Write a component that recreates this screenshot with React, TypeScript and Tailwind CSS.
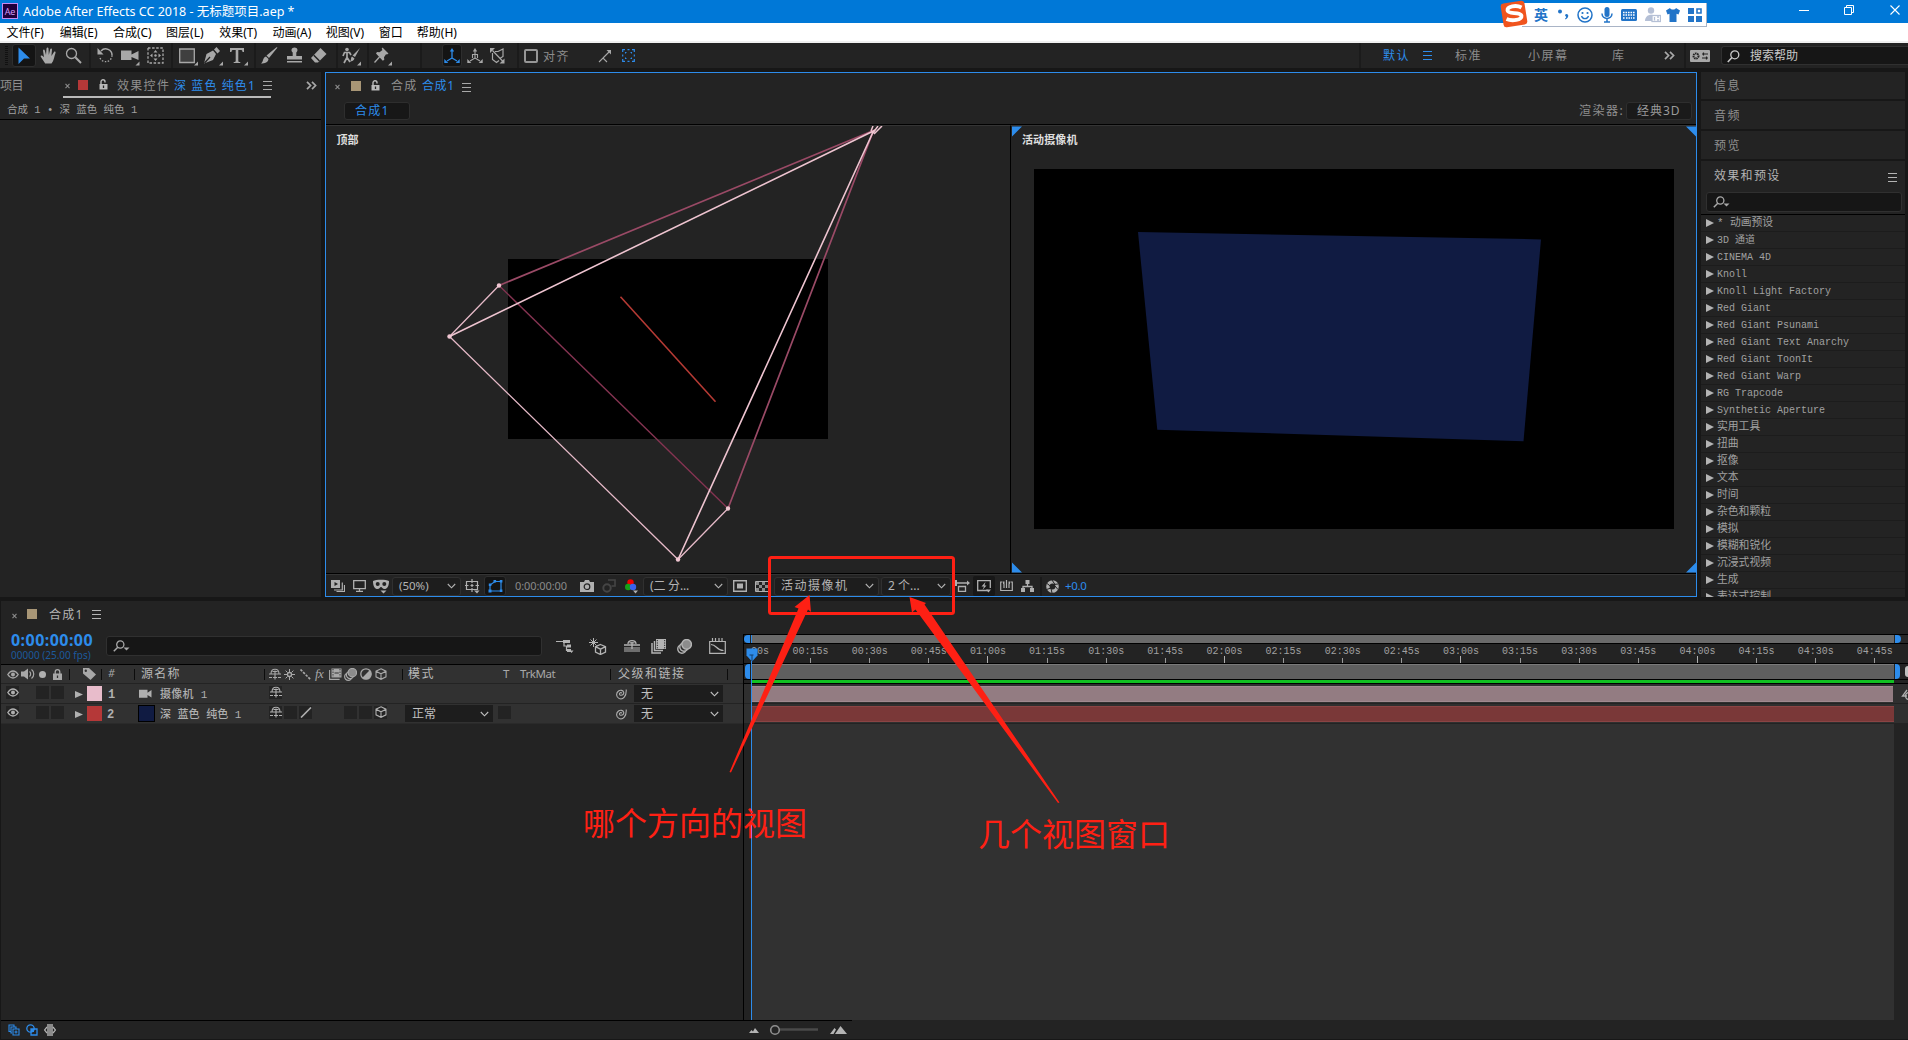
import React, { ReactNode } from "react";

const CJK = "font-['Noto_Sans','Noto_Sans_CJK_SC',sans-serif]";
const MONO = "font-['Liberation_Mono','Noto_Sans_CJK_SC',monospace]";

function Slot({ c, children }: { c: string; children?: ReactNode }) {
  return <div className={`flex h-full shrink-0 items-center whitespace-nowrap ${c}`}>{children}</div>;
}

function Icon({ w, h, vb, className = "", children }: { w: number; h: number; vb?: string; className?: string; children: ReactNode }) {
  return (
    <svg width={w} height={h} viewBox={vb ?? `0 0 ${w} ${h}`} fill="none" stroke="currentColor" strokeWidth="1.3" className={`shrink-0 ${className}`}>
      {children}
    </svg>
  );
}

const F = { fill: "currentColor", stroke: "none" };

const Burger = ({ className = "" }: { className?: string }) => (
  <Icon w={9} h={9} className={className}><path d="M0 .5h9M0 4.5h9M0 8.5h9" strokeWidth="1" /></Icon>
);
const Cross = () => <Icon w={5} h={6} className="text-[#8a8a8a]"><path d="M.5 .8l4 4.4M4.5 .8l-4 4.4" strokeWidth="1.1" /></Icon>;
const Chevrons = () => <Icon w={11} h={9}><path d="M1 .8l3.6 3.7L1 8.2M6 .8l3.6 3.7L6 8.2" strokeWidth="1.7" /></Icon>;
const Unlock = () => (
  <Icon w={9} h={11}><path d="M2 5V2.8a2 2 0 0 1 4 0V3.5" strokeWidth="1.4" /><path d="M.5 5h8v5.5h-8z" {...F} /><path d="M4.5 6.5v2.5" stroke="#232323" /></Icon>
);
const ChevDown = () => <Icon w={9} h={6}><path d="M.8 1l3.7 3.8L8.2 1" strokeWidth="1.1" /></Icon>;
const Find = () => (
  <Icon w={17} h={12}><circle cx="7.3" cy="4.5" r="3.6" /><path d="M4.8 7.2L.8 11.2" strokeWidth="1.5" /><path d="M10.5 7.6h6l-3 3z" {...F} /></Icon>
);

const Eye = () => (
  <Icon w={12} h={9}><path d="M.8 4.5Q3 1 6 1t5.2 3.5Q9 8 6 8T.8 4.5z" /><circle cx="6" cy="4.4" r="2" {...F} /></Icon>
);
const Shy = () => (
  <Icon w={12} h={12}><path d="M2 6C2 3 3.500 1.200 6 1.200s4 1.800 4 4.800M0 6h12M3 9.500h-3M9 9.500h3M6 2.500v9M3.500 3.500h5M4 9.500h4" strokeWidth="1.100" /></Icon>
);
const Cube = () => (
  <Icon w={12} h={12}><path d="M6 .8l5 2.400v5.600l-5 2.500-5-2.500V3.200zM1 3.200l5 2.600 5-2.600M6 5.800v5.500" strokeWidth="1.100" /></Icon>
);
const Film = () => (
  <Icon w={13} h={12}><path d="M2.500 .5h10v9h-10z" {...F} /><path d="M4 1v8M11 1v8" stroke="#313131" strokeDasharray="1.300 1.300" strokeWidth="1" /><path d="M5.500 5h4.300" stroke="#313131" strokeWidth="1" /><path d="M.6 2v9.400h10" strokeWidth="1.100" /></Icon>
);
const Blur = ({ s = 13 }: { s?: number }) => (
  <Icon w={s} h={s} vb="0 0 14 14"><circle cx="4.600" cy="9.400" r="3.900" /><circle cx="6.500" cy="7.500" r="3.900" fill="#313131" /><circle cx="9" cy="5" r="4.500" fill="#8c8c8c" /></Icon>
);
const Spiral = () => (
  <Icon w={12} h={12}><path d="M6.900 5.300a1.300 1.300 0 1 0-.9 2C8 7.300 9 6 8.700 4.400 8.200 2.200 5.400 1.600 3.500 3 .8 5 1 9.200 4.200 10.600 8 12 11.600 8.500 11.200 1.500" strokeWidth="1.100" /></Icon>
);
const CamSmall = () => (
  <Icon w={13} h={10}><path d="M0 .8h8.500v3L12.500 1v7.500L8.500 6v2.800H0z" {...F} /></Icon>
);

function TitleBar() {
  return (
    <div className="flex h-[23px] w-full shrink-0 items-start bg-[#0078d7] text-white">
      <div className="ml-[2px] mt-[3px] flex h-4 w-4 items-center justify-center border border-[#c58af0] bg-[#20003c] font-['Open_Sans'] text-[9px] leading-none text-[#d5a0ff]">Ae</div>
      <div className={`ml-[5px] h-[23px] w-[1776px] whitespace-nowrap text-[12.500px] leading-[23px] ${CJK}`}>Adobe After Effects CC 2018 - 无标题项目.aep *</div>
      <Icon w={11} h={20}><path d="M0 10.500h10" strokeWidth="1" /></Icon>
      <Icon w={12} h={20} className="ml-[34px]"><path d="M.5 7.500h7v7h-7zM2.500 7.500v-2h7v7h-2" strokeWidth="1" /></Icon>
      <Icon w={11} h={20} className="ml-[34px]"><path d="M.5 5.500l9 9M9.500 5.500l-9 9" strokeWidth="1.100" /></Icon>
    </div>
  );
}

function MenuBar() {
  return (
    <div className={`flex h-5 w-full shrink-0 border-b-2 border-[#f0f0f0] bg-white pl-[6.500px] text-[12px] leading-[19px] text-black ${CJK}`}>
      {["文件(F)", "编辑(E)", "合成(C)", "图层(L)", "效果(T)", "动画(A)", "视图(V)"].map((m) => (
        <span key={m} className="w-[53.200px] shrink-0 whitespace-nowrap">{m}</span>
      ))}
      <span className="w-[38px]">窗口</span>
      <span>帮助(H)</span>
    </div>
  );
}

const Sep = ({ c }: { c: string }) => (
  <Slot c={c}><div className="h-full w-[2px] bg-[#1b1b1b]" /></Slot>
);

function ToolBar() {
  return (
    <div className={`flex h-[25px] w-full shrink-0 bg-[#232323] pl-[5px] text-[12px] text-[#a8a8a8] ${CJK}`}>
      <Slot c="w-[7px]"><Icon w={3} h={20}><path d="M1.500 0v20" stroke="#111" strokeWidth="3" strokeDasharray="1 1" /></Icon></Slot>
      <Slot c="w-[28px]">
        <div className="flex h-[23px] w-6 items-center justify-center rounded-[3px] border border-[#2e2e2e] bg-[#141414] text-[#2d8ceb]">
          <Icon w={14} h={18}><path d="M1.500 0.500l11.500 11H7l-5.500 5.500z" {...F} /></Icon>
        </div>
      </Slot>
      <Slot c="w-[25px]">
        <Icon w={17} h={17}><path d="M5.200 16.500C3.500 14 1.500 11 .5 9c.8-1 2-.5 3.500 1.200L3 3.500c.2-1.300 1.500-1.300 1.800 0L6 8 6.500 1.500C6.800.2 8.300.2 8.500 1.500L8.800 8l1.400-5.800c.5-1.200 1.800-.9 1.800.4L11.400 9l2.600-4c.8-.9 1.900-.2 1.500.9-1.200 3.200-1.600 7.600-4 10.600z" {...F} /></Icon>
      </Slot>
      <Slot c="w-[24px]"><Icon w={17} h={17}><circle cx="6.500" cy="6.500" r="5" /><path d="M10.300 10.300l5.700 5.700" strokeWidth="2" /></Icon></Slot>
      <Sep c="w-[8px]" />
      <Slot c="w-[24px]"><Icon w={17} h={17}><path d="M4 4a6.300 6.300 0 0 1 11 4.500" strokeWidth="1.500" /><path d="M15 8.500A6.300 6.300 0 0 1 2.500 9.500" strokeDasharray="1.500 1.500" /><path d="M.5 1v6.500h6z" {...F} /></Icon></Slot>
      <Slot c="w-[26px]"><Icon w={20} h={20}><path d="M0 4.500h10.500v4L17.500 5v9l-7-3v3H0z" {...F} /><path d="M18.500 15.500v4h-4z" {...F} /></Icon></Slot>
      <Slot c="w-[24px]"><Icon w={17} h={17}><path d="M1 1h15v15H1z" strokeDasharray="2.500 1.600" /><path d="M8.500 3l2 2.500h-4zM8.500 14l2-2.500h-4zM3 8.500l2.500-2v4zM14 8.500l-2.500-2v4z" {...F} /><circle cx="8.500" cy="8.500" r="1.200" {...F} /></Icon></Slot>
      <Sep c="w-[8px]" />
      <Slot c="w-[25px]"><Icon w={20} h={20}><path d="M.7 3h14.600v13.500H.7z" fill="#3f3f3f" /><path d="M19 15.500v4h-4z" {...F} /></Icon></Slot>
      <Slot c="w-[26px]"><Icon w={22} h={20}><path d="M0 17.500L2.500 8 9 4.500 12 8l-3 6zM10 3.500L12.500 1 16 5l-2.500 2.500z" {...F} /><path d="M.5 17l5.500-6" stroke="#232323" /><path d="M19 15.500v4h-4z" {...F} /></Icon></Slot>
      <Slot c="w-[24px]"><Icon w={20} h={20}><path d="M0 2h14v4h-1.500c0-1.500-.5-2-2-2H8.300v11c0 .8.500 1 2 1v1H3.700v-1c1.500 0 2-.2 2-1V4H3.500C2 4 1.500 4.500 1.500 6H0z" {...F} /><path d="M18 15.500v4h-4z" {...F} /></Icon></Slot>
      <Sep c="w-[7px]" />
      <Slot c="w-[25px]"><Icon w={17} h={17}><path d="M16.500 .5L8 11 5.500 8.500 15.500.200zM5 9.500l2.500 2.500C7 15.500 4 16.500 0 16.500 2.500 15 1.500 10.500 5 9.500z" {...F} /></Icon></Slot>
      <Slot c="w-[24px]"><Icon w={17} h={17}><path d="M6.700 9V5.500C4.500 3.500 5.500.5 8.500.5s4 3 1.800 5V9H16v3.500H1V9zM1 14h15v1.500H1z" {...F} /></Icon></Slot>
      <Slot c="w-[26px]"><Icon w={18} h={17}><path d="M10.500 1L16.500 7 8 15.500H5L1 11z" {...F} /><path d="M3.800 8.300L9.500 14" stroke="#232323" strokeWidth="1.500" /></Icon></Slot>
      <Sep c="w-[6px]" />
      <Slot c="w-[25px]"><Icon w={20} h={20}><circle cx="5" cy="3.500" r="1.800" {...F} /><path d="M1 10l1.500-3.500h5L9 9M5 6.500v5L2 17M5 11.500L8 16" strokeWidth="1.700" /><path d="M18 2l-5 9-2.500-1.500zM10 10.500l2.500 2c-.5 2-2.500 3-4.500 3 1.500-1.500.5-4 2-5z" {...F} /><path d="M19 15.500v4h-4z" {...F} /></Icon></Slot>
      <Sep c="w-[7px]" />
      <Slot c="w-[46px]"><Icon w={20} h={20}><path d="M8.500 1.500l6 6-1.500 1-1-.3-2 3 .3 2.500-1.500 1L2 7.500l1-1.500 2.500.3 3-2.300-.8-1.300z" {...F} /><path d="M5.500 11l-5 5.500" /><path d="M18 15.500v4h-4z" {...F} /></Icon></Slot>
      <Sep c="w-[22px]" />
      <Slot c="w-[25px]">
        <div className="flex h-[23px] w-5 items-center justify-center rounded-[3px] border border-[#2e2e2e] bg-[#141414] text-[#2d8ceb]">
          <Icon w={16} h={16}><path d="M8 3v7M8 10l-5 3M8 10l5 3" /><path d="M8 0l2.200 3.500H5.800zM.3 11v4h4zM15.700 11v4h-4z" {...F} /></Icon>
        </div>
      </Slot>
      <Slot c="w-[23px]"><Icon w={16} h={16}><path d="M8 3v7M8 10l-5 3M8 10l5 3M5.500 10V6.500h5V10" strokeWidth="1.100" /><path d="M8 0l2.200 3.500H5.800zM.3 11v4h4zM15.700 11v4h-4z" {...F} /></Icon></Slot>
      <Slot c="w-[27px]"><Icon w={15} h={16}><path d="M2.500 2.500l10.500 11M5 3.500h3L13 1v7.500L10.500 10M2.500 5v6.500l4 3L9 12.500" strokeWidth="1.200" /><path d="M0 0h5L0 5zM14.500 10.500v5h-5z" {...F} /></Icon></Slot>
      <Sep c="w-[7px]" />
      <Slot c="w-[19px]"><div className="h-[14px] w-[14px] rounded-[2px] border-2 border-[#969696]" /></Slot>
      <Slot c="w-[55px] pt-[2px] tracking-[1.500px] text-[#8c8c8c]">对齐</Slot>
      <Slot c="w-[24px]"><Icon w={14} h={14}><path d="M5 9l7-7M1 13l4-4 4 4" strokeWidth="1.100" /><path d="M8.500 1H13v4.500z" {...F} /></Icon></Slot>
      <Slot c="w-[737px] text-[#2d8ceb]"><Icon w={13} h={13}><path d="M.7 3V.7H3M10 .7h2.300V3M.7 10v2.300H3M10 12.300h2.300V10M.7 5.500v2M12.300 5.500v2M5.500 .7h2M5.500 12.300h2" strokeWidth="1.200" /><path d="M3.500 4.500v-1h1M8.500 3.500h1v1M3.500 8.500v1h1M8.500 9.500h1v-1" strokeWidth="1.100" /></Icon></Slot>
      <Sep c="w-[24px]" />
      <Slot c="w-[40px] pt-px tracking-[1.500px] text-[#2d8ceb]">默认</Slot>
      <Slot c="w-[32px] text-[#2d8ceb]"><Burger /></Slot>
      <Slot c="w-[73px] pt-px tracking-[1.500px] text-[#8c8c8c]">标准</Slot>
      <Slot c="w-[84px] pt-px tracking-[1.500px] text-[#8c8c8c]">小屏幕</Slot>
      <Slot c="w-[52px] pt-px text-[#8c8c8c]">库</Slot>
      <Slot c="w-[20px]"><Chevrons /></Slot>
      <Sep c="w-[6px]" />
      <Slot c="w-[31px]"><Icon w={20} h={12}><rect width="20" height="12" rx="1" {...F} /><circle cx="6" cy="6" r="2.500" stroke="#232323" strokeWidth="2" strokeDasharray="1.500 .6" /><path d="M12 4h6M12 8h6M13.500 2.500v3M16.500 6.500v3" stroke="#232323" strokeWidth="1.200" /></Icon></Slot>
      <Slot c="w-[187px]">
        <div className="flex h-[19px] w-full items-center rounded-l-[3px] border border-r-0 border-[#303030] bg-[#161616] pl-[5px] pt-px text-[#c8c8c8]">
          <Icon w={13} h={13} className="mr-[10px]"><circle cx="7.800" cy="4.800" r="4" /><path d="M5 7.500L.8 12" strokeWidth="1.600" /></Icon>
          搜索帮助
        </div>
      </Slot>
    </div>
  );
}

function ImeBar() {
  return (
    <div className="absolute left-[1500px] top-0 flex h-[27px] w-[207px] items-start text-[#2274c8]">
      <Icon w={29} h={28} className="z-10">
        <rect x="2" y="2" width="24" height="24" rx="3" transform="rotate(-9 14 14)" fill="#f0541e" stroke="none" />
        <path d="M21.500 7.500C16 4.500 7 6.500 7.500 10.500c.5 4 13.500 1 14 5.500.4 4-9.500 5.500-15 3" stroke="#fff" strokeWidth="3.800" />
      </Icon>
      <div className={`-ml-[7px] mt-[3px] flex h-[24px] w-[185px] items-center border-b border-r border-[#a9b4c6] bg-white pl-[12px] text-[14px] font-bold leading-none ${CJK}`}>
        <Slot c="w-[24px]">英</Slot>
        <Slot c="w-[19px]"><Icon w={11} h={12}><circle cx="2" cy="2.500" r="2" {...F} /><path d="M8.500 5c2.500 0 2.500 4-1 5.500l-.5-1c1.200-.7 1.300-1.200 1-2-1.500-.2-1-2.500.500-2.500z" {...F} /></Icon></Slot>
        <Slot c="w-[24px]"><Icon w={16} h={16}><circle cx="8" cy="8" r="7" strokeWidth="1.500" /><circle cx="5.500" cy="6" r="1.100" {...F} /><circle cx="10.500" cy="6" r="1.100" {...F} /><path d="M4.500 9c1 3.500 6 3.500 7 0" /></Icon></Slot>
        <Slot c="w-[20px]"><Icon w={12} h={16}><rect x="3.500" y="0" width="5" height="10" rx="2.500" {...F} /><path d="M1 6.500c0 6.500 10 6.500 10 0M6 11.500V15M3 15h6" strokeWidth="1.500" /></Icon></Slot>
        <Slot c="w-[24px]"><Icon w={16} h={12}><rect width="16" height="12" rx="1.500" {...F} /><path d="M2 3.500h12M2 6h12M2 9h2M5 9h6M12 9h2" stroke="#fff" strokeWidth="1.300" strokeDasharray="1.600 .9" /></Icon></Slot>
        <Slot c="w-[21px] text-[#b5c0d6]"><Icon w={16} h={16}><circle cx="6" cy="3.500" r="3.200" {...F} /><path d="M0 14c0-8 11-8 11-2v2z" {...F} /><rect x="7" y="8.500" width="8.500" height="6" fill="#fff" /><path d="M9.500 10v3.500M12 10h2M12 13h2" /></Icon></Slot>
        <Slot c="w-[22px]"><Icon w={14} h={14}><path d="M4 0c1 2 5 2 6 0l4 2.500-1.500 4-2-.8V14h-7V5.700l-2 .8L0 2.500z" {...F} /></Icon></Slot>
        <Slot c="w-[14px]"><Icon w={14} h={14}><path d="M0 0h6v6H0zM0 8h6v6H0zM8 8h6v6H8z" {...F} /><path d="M9 1h4v4H9z" strokeWidth="1.600" /></Icon></Slot>
      </div>
    </div>
  );
}

function LeftPanel() {
  return (
    <div className={`mr-1 flex h-[525px] w-[321px] shrink-0 flex-col bg-[#232323] text-[12px] text-[#8f8f8f] ${CJK}`}>
      <div className="flex h-[26px] shrink-0">
        <Slot c="w-[63px] pt-px tracking-[-0.500px]">项目</Slot>
        <div className="mr-[35px] flex h-[26px] w-[208px] shrink-0 border-b-2 border-[#b9b9b9] pl-[2px]">
          <Slot c="w-[13px] pt-[4px]"><Cross /></Slot>
          <Slot c="w-[21px] pt-[2px]"><div className="h-[10px] w-[8px] bg-[#b53838] px-[5px]" /></Slot>
          <Slot c="w-[18px] pt-px text-[#b9b9b9]"><Unlock /></Slot>
          <Slot c="w-[57px] pt-[3px] tracking-[1.300px]">效果控件</Slot>
          <Slot c="w-[89px] pt-[3px] text-[#2d8ceb] tracking-[1.100px]">深 蓝色 纯色1</Slot>
          <Slot c="w-[9px] pt-[3px] text-[#a8a8a8]"><Burger /></Slot>
        </div>
        <Slot c="w-[12px] text-[#a8a8a8]"><Chevrons /></Slot>
      </div>
      <div className={`flex h-[22px] shrink-0 items-center whitespace-pre border-b border-black pl-[7px] pt-[4px] text-[10.500px] text-[#a0a0a0] ${MONO}`}>合成 1 • 深 蓝色 纯色 1</div>
    </div>
  );
}

function Dropdown({ c, text }: { c: string; text: string }) {
  return (
    <div className={`flex h-[19px] shrink-0 items-center justify-between whitespace-nowrap rounded-[3px] border border-[#303030] bg-[#1d1d1d] pl-[6px] pr-[4px] text-[#b4b4b4] ${c}`}>
      <span>{text}</span>
      <ChevDown />
    </div>
  );
}

function ViewerBar() {
  return (
    <div className={`flex h-[23px] shrink-0 items-center border-t border-[#343434] pl-[5px] text-[11.500px] text-[#b0b0b0] ${CJK}`}>
      <Slot c="w-[22px]"><Icon w={14} h={12}><path d="M0 0h9v8H0z" {...F} /><path d="M3.500 2v4l3.500-2z" fill="#232323" stroke="none" /><path d="M3 10h8.300V2.500M5.500 11.500h8V5" strokeWidth="1.200" /></Icon></Slot>
      <Slot c="w-[20px]"><Icon w={13} h={12}><path d="M.7.700h11.600v8H.7zM3 11.400h7M6.500 9v2" /></Icon></Slot>
      <Slot c="w-[19px]"><Icon w={16} h={16} className="mt-[2px]"><path d="M0 2C3 .2 13 .2 16 2c0 5.500-2 8-4.500 8C9.500 10 9 8 8 8s-1.500 2-3.500 2C2 10 0 7.500 0 2z" {...F} /><circle cx="4.700" cy="5" r="2" fill="#232323" stroke="none" /><circle cx="11.300" cy="5" r="2" fill="#232323" stroke="none" /><path d="M7.500 11.500h6l-3 3z" {...F} /></Icon></Slot>
      <Dropdown c="w-[69px] mr-1" text="(50%)" />
      <Slot c="w-[19px]"><Icon w={15} h={15}><path d="M1.500 2.500h11v8h-11zM7 0v4M7 9v4M0 6.500h3.500M10.500 6.500H14M7 5v3M5.500 6.500h3" strokeWidth="1.200" /><path d="M9 11.500h5.500L12 14.500z" {...F} /></Icon></Slot>
      <div className="mr-[9px] flex h-5 w-[22px] shrink-0 items-center justify-center rounded-[3px] border border-[#2e2e2e] bg-[#141414] text-[#2d8ceb]">
        <Icon w={15} h={13}><path d="M2 11V5l5-3.500h6V11z" strokeWidth="1.200" /><path d="M.5 9.500h3v3h-3zM.8 3.500h2.600v2.600H.8zM5.500 0h2.600v2.600H5.500zM11.800 0h2.600v2.600h-2.600zM11.800 9.500h2.600v2.600h-2.600z" {...F} /></Icon>
      </div>
      <Slot c="w-[65px] text-[11px] tracking-[-0.100px] text-[#8a8a8a]">0:00:00:00</Slot>
      <Slot c="w-[22px]"><Icon w={14} h={12}><path d="M0 2h4l1-2h4l1 2h4v10H0z" {...F} /><circle cx="7" cy="6.700" r="2.800" stroke="#232323" strokeWidth="1.200" /></Icon></Slot>
      <Slot c="w-[23px] text-[#454545]"><Icon w={14} h={14}><circle cx="5" cy="9" r="3.700" strokeWidth="2" /><path d="M6 1h7v6H9.500" strokeWidth="1.600" /></Icon></Slot>
      <Slot c="w-[18px]"><Icon w={13} h={15}><circle cx="5.500" cy="3.500" r="3.200" fill="#f00000" stroke="none" /><circle cx="3.200" cy="8" r="3.200" fill="#16a016" stroke="none" /><circle cx="8" cy="8" r="3.200" fill="#3a62ee" stroke="none" /><path d="M8 11.500h5L10.500 14.500z" {...F} /></Icon></Slot>
      <Dropdown c="w-[85px] mr-[5px] text-[12px] tracking-[-0.200px]" text="(二 分..." />
      <Slot c="w-[22px]"><Icon w={14} h={12}><path d="M.7.700h12.600v10.600H.7z" strokeWidth="1.400" /><path d="M4 3.500h6v5H4z" {...F} /></Icon></Slot>
      <Slot c="w-[19px]"><Icon w={14} h={11}><path d="M.5.500h13v10H.5z" strokeWidth="1" /><path d="M1 2.500h12M1 8.500h12" strokeWidth="3" strokeDasharray="3 3" stroke="#8a8a8a" /><path d="M4 5.500h9" strokeWidth="3" strokeDasharray="3 3" stroke="#8a8a8a" /></Icon></Slot>
      <Dropdown c="w-[105px] mr-[2px] text-[12px] tracking-[1.500px]" text="活动摄像机" />
      <Dropdown c="w-[70px] mr-1 text-[12px]" text="2 个..." />
      <Slot c="w-[18px]"><Icon w={15} h={12}><path d="M1 3h13M3.500 6.500h7v5h-7z" /><path d="M0 0h2v6H0zM12 .5L15 3l-3 2.500z" {...F} /></Icon></Slot>
      <div className="mr-[5px] flex h-5 w-[22px] shrink-0 items-center justify-center rounded-[2px] bg-[#171717]">
        <Icon w={15} h={13}><path d="M11 10.500H.7V.700h12.600V8" /><path d="M8.500 2L4.500 6.500H7L5.500 10l4-4.500H7.500zM9 9.500h5l-2.500 3z" {...F} /></Icon>
      </div>
      <Slot c="w-[21px]"><Icon w={13} h={12}><path d="M2.500 2H.7v8.500h11.600V2h-1.800M6.500 0v8M4 4v4M9 4v4" strokeWidth="1.200" /><path d="M3 1.500h1.500v2.500H3zM8.500 1.500H10v2.500H8.500z" {...F} /></Icon></Slot>
      <Slot c="w-[19px]"><Icon w={13} h={12}><path d="M4.500 0h4v4h-4zM0 8h4v4H0zM9 8h4v4H9z" {...F} /><path d="M6.500 4v3M2 8V6.500h9V8" /></Icon></Slot>
      <Slot c="w-[6px]"><div className="h-[19px] w-[2px] bg-[#1a1a1a]" /></Slot>
      <Slot c="w-[19px]"><Icon w={13} h={13}><circle cx="6.500" cy="6.500" r="4.600" strokeWidth="3.400" /><path d="M6 0l3 4.500M12 4L7.500 4.500M12 9.500L9 6M6 13L5 8.500M.5 9.500L5 8M1 3.500L4.300 6" stroke="#232323" strokeWidth="1" /></Icon></Slot>
      <Slot c="w-[30px] text-[11.500px] tracking-[-0.300px] text-[#2d8ceb]">+0.0</Slot>
    </div>
  );
}

function Viewer() {
  return (
    <div className={`mr-1 flex h-[525px] w-[1372px] shrink-0 flex-col border border-[#2d8ceb] bg-[#232323] text-[12px] text-[#8f8f8f] ${CJK}`}>
      <div className="flex h-[26px] shrink-0 pl-[9px]">
        <Slot c="w-[16px] pt-[2px]"><Cross /></Slot>
        <Slot c="w-[20px]"><div className="h-[10px] w-[10px] bg-[#a89676]" /></Slot>
        <Slot c="w-[20px] pb-px text-[#b9b9b9]"><Unlock /></Slot>
        <Slot c="w-[31px] tracking-[1.200px]">合成</Slot>
        <Slot c="w-[40px] tracking-[0.600px] text-[#2d8ceb]">合成1</Slot>
        <Slot c="w-[10px] pt-[2px] text-[#a8a8a8]"><Burger /></Slot>
      </div>
      <div className="flex h-[25px] shrink-0 items-start justify-between pl-[18px] pr-[4px] pt-[3px]">
        <div className="flex h-[18px] w-[66px] items-center rounded-[3px] border border-[#2e2e2e] bg-[#171717] pl-[10px] tracking-[1.200px] text-[#2d8ceb]">合成1</div>
        <div className="flex h-[18px] items-center tracking-[1.500px]">
          <span className="w-[47px] whitespace-nowrap">渲染器:</span>
          <div className="flex h-[18px] w-[66px] items-center rounded-[3px] border border-[#2e2e2e] bg-[#1a1a1a] pl-[10px] tracking-[1px] text-[#9a9a9a]">经典3D</div>
        </div>
      </div>
      <div className="flex h-[450px] shrink-0 border-y border-black text-[11px] font-bold text-[#dedede]">
        <div className="relative w-[684px] shrink-0 border-t border-[#343434]">
          <svg width="684" height="447" viewBox="326 126 684 447" fill="none" className="block">
            <rect x="508" y="259" width="320" height="180" fill="#000" />
            <g strokeWidth="1.300">
              <path d="M728 508.500L499 285.500" stroke="#863452" />
              <path d="M499 285.500L873.500 130.500L728 508.500" stroke="#9a4a66" strokeWidth="1.700" />
              <path d="M499 285.500L449.500 336.500L678 559.500L728 508.500" stroke="#e6bac8" />
              <path d="M449.500 336.500L873.500 131L678 559.500" stroke="#eec4d0" strokeWidth="1.600" />
              <path d="M620.500 296.700L715.500 401.700" stroke="#b53a34" strokeWidth="1.600" />
              <path d="M871 131l2-5M874 134l8-8M878 126l-5 7" stroke="#eec4d0" strokeWidth="1.500" />
            </g>
            <g fill="#f0c6d2">
              <circle cx="499" cy="285.500" r="2.200" />
              <circle cx="449.500" cy="336.500" r="2.200" />
              <circle cx="678" cy="559.500" r="2.200" />
              <circle cx="728" cy="508.500" r="2.200" />
            </g>
          </svg>
          <span className="absolute left-[10.500px] top-[6px] tracking-[-0.100px]">顶部</span>
        </div>
        <div className="relative w-[686px] shrink-0 border-l border-t border-l-black border-t-[#343434]">
          <svg width="685" height="447" viewBox="1011 126 685 447" fill="none" className="block">
            <rect x="1034" y="169" width="640" height="360" fill="#000" />
            <path d="M1138 232L1541 239.400L1523.500 441.300L1157.300 429.700z" fill="#101b42" />
            <path d="M1012 126.500h10l-10 10zM1696 126.500h-10l10 10zM1012 572.500v-10l10 10zM1696 572.500v-10l-10 10z" fill="#2d8ceb" />
          </svg>
          <span className="absolute left-[11px] top-[6px] tracking-[0.100px]">活动摄像机</span>
        </div>
      </div>
      <ViewerBar />
    </div>
  );
}

const PRESETS = [
  "* 动画预设", "3D 通道", "CINEMA 4D", "Knoll", "Knoll Light Factory", "Red Giant", "Red Giant Psunami",
  "Red Giant Text Anarchy", "Red Giant ToonIt", "Red Giant Warp", "RG Trapcode", "Synthetic Aperture",
  "实用工具", "扭曲", "抠像", "文本", "时间", "杂色和颗粒", "模拟", "模糊和锐化", "沉浸式视频", "生成", "表达式控制",
];

function RightPanel() {
  return (
    <div className={`flex h-[525px] w-[204px] shrink-0 flex-col overflow-hidden bg-[#232323] text-[12px] text-[#8f8f8f] ${CJK}`}>
      {["信息", "音频", "预览"].map((t, i) => (
        <div key={t} className={`flex shrink-0 items-center border-b-2 border-[#171717] pl-[13px] tracking-[1.500px] ${i === 0 ? "h-[29px]" : "h-[30px] pt-px"}`}>{t}</div>
      ))}
      <div className="flex h-[30px] shrink-0 items-center justify-between pl-[13px] pr-[8px] tracking-[1.300px] text-[#b4b4b4]">效果和预设<Burger className="mt-[2px]" /></div>
      <div className="ml-[5px] mt-px flex h-5 w-[196px] shrink-0 items-center rounded-[3px] border border-[#303030] bg-[#161616] pl-[6px] text-[#a8a8a8]"><Find /></div>
      <div className={`mt-[2px] shrink-0 border-t border-black text-[10px] text-[#a0a0a0] ${MONO}`}>
        {PRESETS.map((p, i) => (
          <div key={p} className="flex h-[17px] items-center whitespace-pre border-b border-[#1c1c1c] pl-[5px]">
            <Icon w={8} h={8} className="mr-[3px] text-[#b4b4b4]"><path d="M0 0l8 4-8 4z" {...F} /></Icon>
            <span className={i > 11 || i === 0 ? "pt-px text-[10.800px]" : "pt-px"}>{p}</span>
          </div>
        ))}
      </div>
    </div>
  );
}

const HSep = ({ c }: { c: string }) => <Slot c={c}><div className="h-[11px] w-px bg-[#0c0c0c]" /></Slot>;
const Box = ({ c, children }: { c: string; children?: ReactNode }) => (
  <Slot c={c}><div className="-mt-[3px] flex h-[13px] w-[13px] items-center justify-center bg-[#232323]">{children}</div></Slot>
);
const Select = ({ c, t }: { c: string; t: string }) => (
  <div className={`flex h-[17px] shrink-0 items-center justify-between bg-[#1d1d1d] pl-[7px] pr-[4px] text-[12px] text-[#c0c0c0] ${c} ${CJK}`}>{t}<ChevDown /></div>
);

function Layers() {
  return (
    <div className="flex w-[742px] shrink-0 flex-col">
      <div className={`flex h-[18px] shrink-0 bg-[#313131] pl-[6px] text-[12px] text-[#a8a8a8] ${CJK}`}>
        <Slot c="w-[14px]"><Eye /></Slot>
        <Slot c="w-[18px]"><Icon w={14} h={12}><path d="M0 3.500h3L7 .5v11L3 8.500H0z" {...F} /><path d="M8.500 3.500c1.500 1 1.500 4 0 5M10.500 1.500c3 2 3 7 0 9" strokeWidth="1.200" /></Icon></Slot>
        <Slot c="w-[14px]"><div className="h-[7px] w-[7px] rounded-full bg-[#b0b0b0]" /></Slot>
        <Slot c="w-[16px]"><Icon w={9} h={11}><path d="M2.200 5V3a2.300 2.300 0 0 1 4.600 0v2" /><path d="M0 4.500h9v6.500H0z" {...F} /><path d="M4.500 6.500v2.500" stroke="#313131" /></Icon></Slot>
        <HSep c="w-[14px]" />
        <Slot c="w-[18px]"><Icon w={13} h={12}><path d="M0 0h6l7 6.500L7.500 12 0 5.500z" {...F} /><circle cx="2.800" cy="2.800" r="1.200" fill="#313131" stroke="none" /></Icon></Slot>
        <HSep c="w-[7px]" />
        <Slot c="w-[26px] text-[10.500px] italic">#</Slot>
        <HSep c="w-[7px]" />
        <Slot c="w-[123px] tracking-[1.300px] text-[#b8b8b8]">源名称</Slot>
        <HSep c="w-[5px]" />
        <Slot c="w-[15px]"><Shy /></Slot>
        <Slot c="w-[16px]"><Icon w={11} h={11}><circle cx="5.500" cy="5.500" r="2" /><path d="M5.500 0v3M5.500 8v3M0 5.500h3M8 5.500h3M1.600 1.600l2 2M7.400 7.400l2 2M9.400 1.600l-2 2M3.600 7.400l-2 2" strokeWidth="1" /></Icon></Slot>
        <Slot c="w-[15px]"><Icon w={11} h={11}><path d="M.5.500l10 10" strokeWidth="1.700" strokeDasharray="2.500 1.200" /></Icon></Slot>
        <Slot c="w-[14px] font-['Liberation_Serif'] text-[13px] italic tracking-[-0.500px]">fx</Slot>
        <Slot c="w-[15px]"><Film /></Slot>
        <Slot c="w-[16px]"><Blur /></Slot>
        <Slot c="w-[15px]"><Icon w={12} h={12}><circle cx="6" cy="6" r="5.200" /><path d="M9.700 2.300a5.200 5.200 0 0 1-7.400 7.400z" {...F} /></Icon></Slot>
        <Slot c="w-[26.500px]"><Cube /></Slot>
        <HSep c="w-[6.500px]" />
        <Slot c="w-[95px] tracking-[1.500px] text-[#b8b8b8]">模式</Slot>
        <Slot c="w-[17px] text-[11.500px]">T</Slot>
        <Slot c="w-[90px] text-[11.500px] tracking-[-0.400px]">TrkMat</Slot>
        <HSep c="w-[8px]" />
        <Slot c="w-[109px] tracking-[1.500px] text-[#b8b8b8]">父级和链接</Slot>
        <HSep c="w-[5px]" />
      </div>
      <div className={`mt-px flex h-[20px] shrink-0 items-center border-b border-[#232323] bg-[#313131] pl-[5px] text-[10.800px] text-[#b0b0b0] ${MONO}`}>
        <Box c="w-[30px]"><Eye /></Box>
        <Box c="w-[15px]" />
        <Box c="w-[24px]" />
        <Slot c="w-[12px] pt-px"><Icon w={8} h={7}><path d="M0 0l8 3.500L0 7z" {...F} /></Icon></Slot>
        <Slot c="w-[21px]"><div className="h-[15px] w-[15px] bg-[#e8bccb]" /></Slot>
        <Slot c="w-[31px] pt-[2px] text-[12px] font-bold">1</Slot>
        <Slot c="w-[21px]"><CamSmall /></Slot>
        <Slot c="w-[109px] whitespace-pre pt-[3px] text-[11px] font-medium tracking-[0.300px]">摄像机 1</Slot>
        <Box c="w-[346px]"><Shy /></Box>
        <Slot c="w-[19px]"><Spiral /></Slot>
        <Select c="w-[89px]" t="无" />
      </div>
      <div className={`flex h-[20px] shrink-0 items-center border-b border-[#2a2a2a] bg-[#313131] pl-[5px] text-[10.800px] text-[#b0b0b0] ${MONO}`}>
        <Box c="w-[30px]"><Eye /></Box>
        <Box c="w-[15px]" />
        <Box c="w-[24px]" />
        <Slot c="w-[12px] pt-px"><Icon w={8} h={7}><path d="M0 0l8 3.500L0 7z" {...F} /></Icon></Slot>
        <Slot c="w-[20px]"><div className="h-[15px] w-[15px] bg-[#b53838]" /></Slot>
        <Slot c="w-[31px] pt-[2px] text-[12px] font-bold">2</Slot>
        <Slot c="w-[22px]"><div className="h-[17px] w-[17px] border border-black bg-[#101b42]" /></Slot>
        <Slot c="w-[109px] whitespace-pre pt-[3px] text-[11px] font-medium">深 蓝色 纯色 1</Slot>
        <Box c="w-[15px]"><Shy /></Box>
        <Box c="w-[15px]" />
        <Box c="w-[45px]"><Icon w={12} h={11}><path d="M1 10.500L11 .5" strokeWidth="1.600" /></Icon></Box>
        <Box c="w-[15px]" />
        <Box c="w-[15px]" />
        <Box c="w-[31px]"><Cube /></Box>
        <Select c="w-[88px] mr-[5px]" t="正常" />
        <Box c="w-[117px]" />
        <Slot c="w-[19px]"><Spiral /></Slot>
        <Select c="w-[89px]" t="无" />
      </div>
    </div>
  );
}

const TIMES = Array.from({ length: 19 }, (_, i) => {
  const s = (i + 1) * 15;
  return `0${Math.floor(s / 60)}:${String(s % 60).padStart(2, "0")}s`;
});

function Tracks() {
  return (
    <div className="relative flex h-[386px] w-[1165px] shrink-0 flex-col border-l border-black bg-[#282828]">
      <div className="flex h-[10px] shrink-0 border-y border-black">
        <div className="h-2 w-[6px] rounded-l-full bg-[#2d8ceb]" />
        <div className="ml-px h-2 w-[1143px] border-l border-[#2d8ceb] bg-[#6a6a6a]" />
        <div className="ml-px h-2 w-[6px] rounded-r-full bg-[#2d8ceb]" />
      </div>
      <div className={`flex h-[19px] shrink-0 overflow-hidden bg-[#232323] pl-[7px] text-[10px] leading-[15px] text-[#a0a0a0] ${MONO}`}>
        <div className="w-[30px] shrink-0">00s</div>
        {TIMES.map((t, i) => (
          <div key={t} className="flex w-[59.130px] shrink-0 flex-col items-center justify-between">
            <span className="h-[10px]">{t}</span>
            <span className={i % 4 === 3 ? "h-[7px] w-px bg-[#b0b0b0]" : "h-[5px] w-px bg-[#9a9a9a]"} />
          </div>
        ))}
      </div>
      <div className="flex h-[17px] shrink-0 border-y border-black bg-[#232323]">
        <div className="ml-px h-[15px] w-[5px] rounded-l-[4px] bg-[#2d8ceb]" />
        <div className="ml-px h-[15px] w-[1143px] border-t border-[#7a7a7a] bg-[#5f5f5f]" />
        <div className="ml-px h-[15px] w-[5px] rounded-r-[4px] bg-[#2d8ceb]" />
        <div className="ml-[5px] mt-[2px] h-[11px] w-[3px] rounded-l-sm bg-[#c0c0c0]" />
      </div>
      <div className="h-[4px] shrink-0 border-b border-black bg-[#232323] pl-[7px]"><div className="h-[3px] w-[1143px] bg-[#12c022]" /></div>
      <div className="flex h-[20px] shrink-0 border-b border-[#232323] bg-[#2f2f2f] pl-[7px] pt-[2px]">
        <div className="h-[16px] w-[1143px] border-y border-t-[#a08a90] border-b-[#a08a90] bg-[#937c82]" />
        <div className="ml-[8px] w-[7px] overflow-hidden pt-[3px] text-[#b0b0b0]"><Icon w={12} h={12}><path d="M6 1L1.500 7H6" /><circle cx="8" cy="7" r="3.500" /></Icon></div>
      </div>
      <div className="h-[20px] shrink-0 border-b border-[#232323] bg-[#2f2f2f] pl-[7px] pt-[2px]">
        <div className="h-[16px] w-[1143px] border-y border-[#8a4444] bg-[#7a3838]" />
      </div>
      <div className="flex flex-1">
        <div className="w-[7px] bg-[#232323]" />
        <div className="w-[1143px] bg-[#313131]" />
        <div className="flex-1 bg-[#232323]" />
      </div>
      <div className="absolute left-[7px] top-[27px] h-[359px] w-px bg-[#2d8ceb]" />
      <Icon w={12} h={14} className="absolute left-[2px] top-[14px]"><path d="M.5.500h11v7L6 13.500.5 7.500z" fill="#2d8ceb" stroke="none" /><path d="M3.500 7h4M6 7v6" stroke="#14406e" strokeWidth="1" /></Icon>
    </div>
  );
}

function Timeline() {
  return (
    <div className={`ml-px mt-1 flex h-[438px] w-[1907px] shrink-0 flex-col bg-[#232323] text-[12px] text-[#b4b4b4] ${CJK}`}>
      <div className="flex h-[26px] shrink-0 pl-[11px]">
        <Slot c="w-[15px] pt-[4px]"><Cross /></Slot>
        <Slot c="w-[22px]"><div className="h-[10px] w-[10px] bg-[#a89676]" /></Slot>
        <Slot c="w-[43px] pt-px tracking-[1.200px]">合成1</Slot>
        <Slot c="w-[12px] pt-px"><Burger /></Slot>
      </div>
      <div className="flex h-[393px] shrink-0 items-start">
        <div className="flex h-[393px] w-[742px] shrink-0 flex-col">
          <div className="flex h-[38px] shrink-0 border-b border-black pl-[10px]">
            <div className="w-[95px] shrink-0">
              <div className="mt-[4px] h-[18px] text-[16px] font-bold leading-[18px] tracking-[0.450px] text-[#2d8ceb]">0:00:00:00</div>
              <div className="h-[12px] whitespace-nowrap text-[10px] leading-[13px] text-[#1c5a9c]">00000 (25.00 fps)</div>
            </div>
            <div className="mr-[14px] mt-[9px] flex h-[20px] w-[436px] shrink-0 items-center rounded-[3px] border border-[#303030] bg-[#161616] pl-[6px] text-[#a8a8a8]"><Find /></div>
            <div className="flex h-[38px] items-center">
              <Slot c="w-[33px]"><Icon w={18} h={13}><path d="M0 1.500h8M4 1.500h4v4.500h5M10.500 6v4.500h3" strokeWidth="1.200" /><path d="M7 0h7v3H7zM11 4.500h4v3h-4zM11 9h4v3h-4zM13.500 10.500h4l-2 2.500z" {...F} /></Icon></Slot>
              <Slot c="w-[35px]"><Icon w={18} h={17}><path d="M4.500 0v9M0 4.500h9M1.500 1.500l6 6M7.500 1.500l-6 6" strokeWidth="1" /><path d="M11.500 6.500l5 2.200v5.500l-5 2.300-5-2.300V8.700zM6.500 8.700l5 2.500 5-2.500M11.500 11.200v5.300" strokeWidth="1.300" fill="#232323" /></Icon></Slot>
              <Slot c="w-[27px]"><Icon w={16} h={14}><path d="M0 8h16v5H0z" fill="#6e6e6e" stroke="none" /><path d="M4 5C4 3 5.500 1.700 8 1.700S12 3 12 5M0 6h16M8 3v7M5.500 3.800h5" strokeWidth="1.300" /></Icon></Slot>
              <Slot c="w-[26px]"><Icon w={15} h={15}><path d="M5 0h10v10H5z" {...F} /><path d="M6.300 1v9M13.700 1v9" stroke="#232323" strokeDasharray="1.200 1.200" strokeWidth="1" /><path d="M3.500 2v9.500H12M1 4v10h9" strokeWidth="1.500" /></Icon></Slot>
              <Slot c="w-[32px]"><Blur s={15} /></Slot>
              <Slot c="w-[18px]"><Icon w={17} h={16}><path d="M.7 3.500h15.600v11.800H.7zM3.500 0v3M6.500 0v3M10 0v3M13 0v3M2 6.500c6 0 5 6 12.500 6" strokeWidth="1.200" /></Icon></Slot>
            </div>
          </div>
          <div className="flex flex-1 flex-col"><Layers /></div>
        </div>
        <div className="flex flex-col pt-[7px]"><Tracks /></div>
      </div>
      <div className="flex h-[19px] shrink-0 flex-col">
        <div className="h-px w-[851px] bg-black" />
        <div className="flex h-[18px] items-center pl-[7px]">
          <Slot c="w-[18px] text-[#2d8ceb]"><Icon w={12} h={12}><path d="M2.500 7.500H1V1h5v1.500M4 9H3V3h5v1.500M5 5h6v6H5zM8 6.500v3M6.500 8h3" strokeWidth="1.100" /></Icon></Slot>
          <Slot c="w-[18px] text-[#2d8ceb]"><Icon w={12} h={12}><circle cx="4.500" cy="4.500" r="3.700" /><path d="M5 5h6v6H5z" /><path d="M5 5h3v3H5z" {...F} /></Icon></Slot>
          <Slot c="w-[705px]"><Icon w={12} h={12}><path d="M3 0h6v12H3z" fill="#8a8a8a" stroke="none" /><path d="M3 3L.5 6 3 9M9 3l2.500 3L9 9" strokeWidth="1.200" /></Icon></Slot>
          <Slot c="w-[20px]"><Icon w={10} h={5}><path d="M0 5l2.500-3L4 3.500 6 0l4 5z" {...F} /></Icon></Slot>
          <Slot c="w-[61px]"><Icon w={50} h={12}><path d="M11 5.500h38" stroke="#4a4a4a" strokeWidth="2.500" /><circle cx="6" cy="6" r="4.300" strokeWidth="1.600" stroke="#8f8f8f" /></Icon></Slot>
          <Slot c="w-[18px]"><Icon w={17} h={8}><path d="M0 8l4.500-6L6 3.500 3.500 8zM5 8l5.500-8L17 8z" {...F} /></Icon></Slot>
        </div>
      </div>
    </div>
  );
}

function Annotations() {
  return (
    <>
      <svg width="1908" height="1040" viewBox="0 0 1908 1040" className="pointer-events-none absolute left-0 top-0" fill="#fe2014">
        <rect x="769.500" y="557.500" width="184" height="56" rx="2" fill="none" stroke="#fe2014" strokeWidth="3" />
        <path d="M809.500 595L794.500 607L798.500 608.500L729.500 772L731 772.500L808 609.500L811 612z" />
        <path d="M909.500 597L912 612.500L915.500 609.500L1058 803L1059.500 802.500L924.500 604.500L926 603z" />
      </svg>
      <span className={`absolute left-[583px] top-[800px] whitespace-nowrap text-[32px] leading-[46px] text-[#fe2014] ${CJK}`}>哪个方向的视图</span>
      <span className={`absolute left-[978px] top-[811px] whitespace-nowrap text-[32px] leading-[46px] text-[#fe2014] ${CJK}`}>几个视图窗口</span>
    </>
  );
}

export default function App() {
  return (
    <div className="relative flex h-[1040px] w-[1908px] flex-col overflow-hidden bg-[#171717]">
      <TitleBar />
      <MenuBar />
      <ToolBar />
      <div className="mt-1 flex h-[525px] shrink-0">
        <LeftPanel />
        <Viewer />
        <RightPanel />
      </div>
      <Timeline />
      <ImeBar />
      <Annotations />
    </div>
  );
}
